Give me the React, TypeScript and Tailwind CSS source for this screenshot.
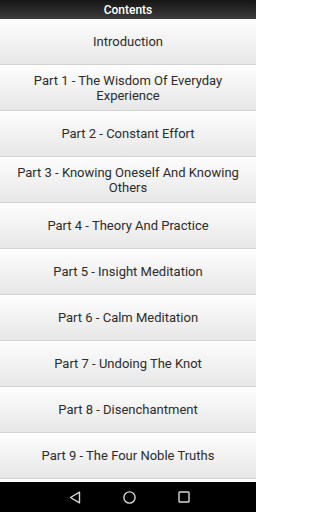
import React from "react";

const items: string[][] = [
  ["Introduction"],
  ["Part 1 - The Wisdom Of Everyday", "Experience"],
  ["Part 2 - Constant Effort"],
  ["Part 3 - Knowing Oneself And Knowing", "Others"],
  ["Part 4 - Theory And Practice"],
  ["Part 5 - Insight Meditation"],
  ["Part 6 - Calm Meditation"],
  ["Part 7 - Undoing The Knot"],
  ["Part 8 - Disenchantment"],
  ["Part 9 - The Four Noble Truths"],
  [],
];

export default function App() {
  return (
    <div
      className="w-[256px] h-[512px] flex flex-col overflow-hidden bg-white"
      style={{ fontFamily: "Roboto, 'Liberation Sans', sans-serif" }}
    >
      <div className="h-[19px] shrink-0 flex items-center justify-center bg-gradient-to-b from-[#161616] to-[#3d3d3d] text-white text-[12px] font-medium leading-none">
        Contents
      </div>
      <div className="flex-1 overflow-hidden flex flex-col">
        {items.map((lines, i) => (
          <div
            key={i}
            className="h-[46px] shrink-0 flex flex-col items-center justify-center border-b border-[#d2d2d2] bg-gradient-to-b from-[#fdfdfd] to-[#e7e7e7] text-[#2c2c2c] text-[13px] font-normal leading-[15px] text-center"
          >
            {lines.map((l, j) => (
              <span key={j}>{l}</span>
            ))}
          </div>
        ))}
      </div>
      <div className="h-[30px] shrink-0 bg-black flex items-center justify-center gap-[42px]">
        <svg width="12" height="13" viewBox="0 0 12 13" className="ml-[2px]">
          <path d="M10.5 1.2 L1.5 6.5 L10.5 11.8 Z" fill="none" stroke="#d8d8d8" strokeWidth="1.4" strokeLinejoin="round" />
        </svg>
        <svg width="13" height="13" viewBox="0 0 13 13">
          <circle cx="6.5" cy="6.5" r="5.6" fill="none" stroke="#d8d8d8" strokeWidth="1.4" />
        </svg>
        <svg width="12" height="12" viewBox="0 0 12 12">
          <rect x="1" y="1" width="10" height="10" rx="0.8" fill="none" stroke="#d8d8d8" strokeWidth="1.4" />
        </svg>
      </div>
    </div>
  );
}
